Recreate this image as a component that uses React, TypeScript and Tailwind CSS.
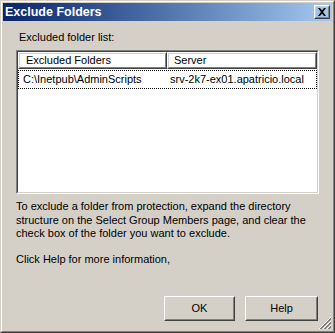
import React from 'react';

const font = { fontFamily: '"Liberation Sans", Arial, sans-serif' };

const Raised = ({ children, className = '' }: { children: React.ReactNode; className?: string }) => (
  <div className={`border border-t-white border-l-white border-r-[#404040] border-b-[#404040] ${className}`}>
    <div className="h-full w-full border border-t-[#d4d0c8] border-l-[#d4d0c8] border-r-[#808080] border-b-[#808080] flex items-center">
      {children}
    </div>
  </div>
);

const Grip = () => (
  <svg width="12" height="12" viewBox="0 0 12 12" className="absolute right-[3px] bottom-[3px]">
    {[0, 4, 8].map((o) => (
      <g key={o}>
        <line x1={12} y1={o} x2={o} y2={12} stroke="#ffffff" strokeWidth="1" />
        <line x1={12} y1={o + 1} x2={o + 1} y2={12} stroke="#808080" strokeWidth="1" />
        <line x1={12} y1={o + 2} x2={o + 2} y2={12} stroke="#808080" strokeWidth="1" />
      </g>
    ))}
  </svg>
);

export default function App() {
  return (
    <div style={font} className="w-[335px] h-[333px] text-[11px] text-black">
      <div className="relative w-full h-full bg-[#d4d0c8] border border-t-[#d4d0c8] border-l-[#d4d0c8] border-r-[#404040] border-b-[#404040]">
        <div className="w-full h-full border border-t-white border-l-white border-r-[#808080] border-b-[#808080] p-px flex flex-col">
          {/* title bar */}
          <div className="h-[18px] flex items-center justify-between pl-[2px] pr-[2px] bg-gradient-to-r from-[#0a246a] to-[#a6caf0]">
            <span className="text-white font-bold text-[12.5px] leading-none">Exclude Folders</span>
            <Raised className="w-[16px] h-[14px]">
              <svg width="12" height="10" viewBox="0 0 12 10" className="mx-auto">
                <path d="M2 1h2l2 2.5L8 1h2L7 5l3 4H8L6 6.5 4 9H2l3-4z" fill="#000" />
              </svg>
            </Raised>
          </div>

          <div className="flex-1 flex flex-col px-[13px]">
            <div className="pl-[3px] mt-[10px] leading-[13px]">Excluded folder list:</div>

            {/* list view */}
            <div className="mt-[6px] h-[144px] border border-t-[#808080] border-l-[#808080] border-r-white border-b-white">
              <div className="h-full border border-t-[#404040] border-l-[#404040] border-r-[#d4d0c8] border-b-[#d4d0c8] bg-white flex flex-col">
                <div className="flex h-[17px] whitespace-nowrap">
                  <Raised className="w-[149px] h-full">
                    <span className="pl-[6px]">Excluded Folders</span>
                  </Raised>
                  <Raised className="flex-1 h-full">
                    <span className="pl-[5px]">Server</span>
                  </Raised>
                </div>
                <div className="mt-[1px] h-[19px] border border-dotted border-black flex items-center whitespace-nowrap">
                  <span className="w-[149px] pl-[4px]">C:\Inetpub\AdminScripts</span>
                  <span className="pl-[2px]">srv-2k7-ex01.apatricio.local</span>
                </div>
              </div>
            </div>

            <p className="mt-[6px] leading-[13.5px]">
              To exclude a folder from protection, expand the directory structure on the Select Group Members page, and clear the check box of the folder you want to exclude.
            </p>
            <p className="mt-[12px] leading-[13.5px]">Click Help for more information,</p>

            <div className="mt-auto mb-[9px] flex justify-end gap-[10px] pr-[1px]">
              <Raised className="w-[71px] h-[25px]">
                <span className="w-full text-center">OK</span>
              </Raised>
              <Raised className="w-[73px] h-[25px]">
                <span className="w-full text-center">Help</span>
              </Raised>
            </div>
          </div>
        </div>
        <Grip />
      </div>
    </div>
  );
}
